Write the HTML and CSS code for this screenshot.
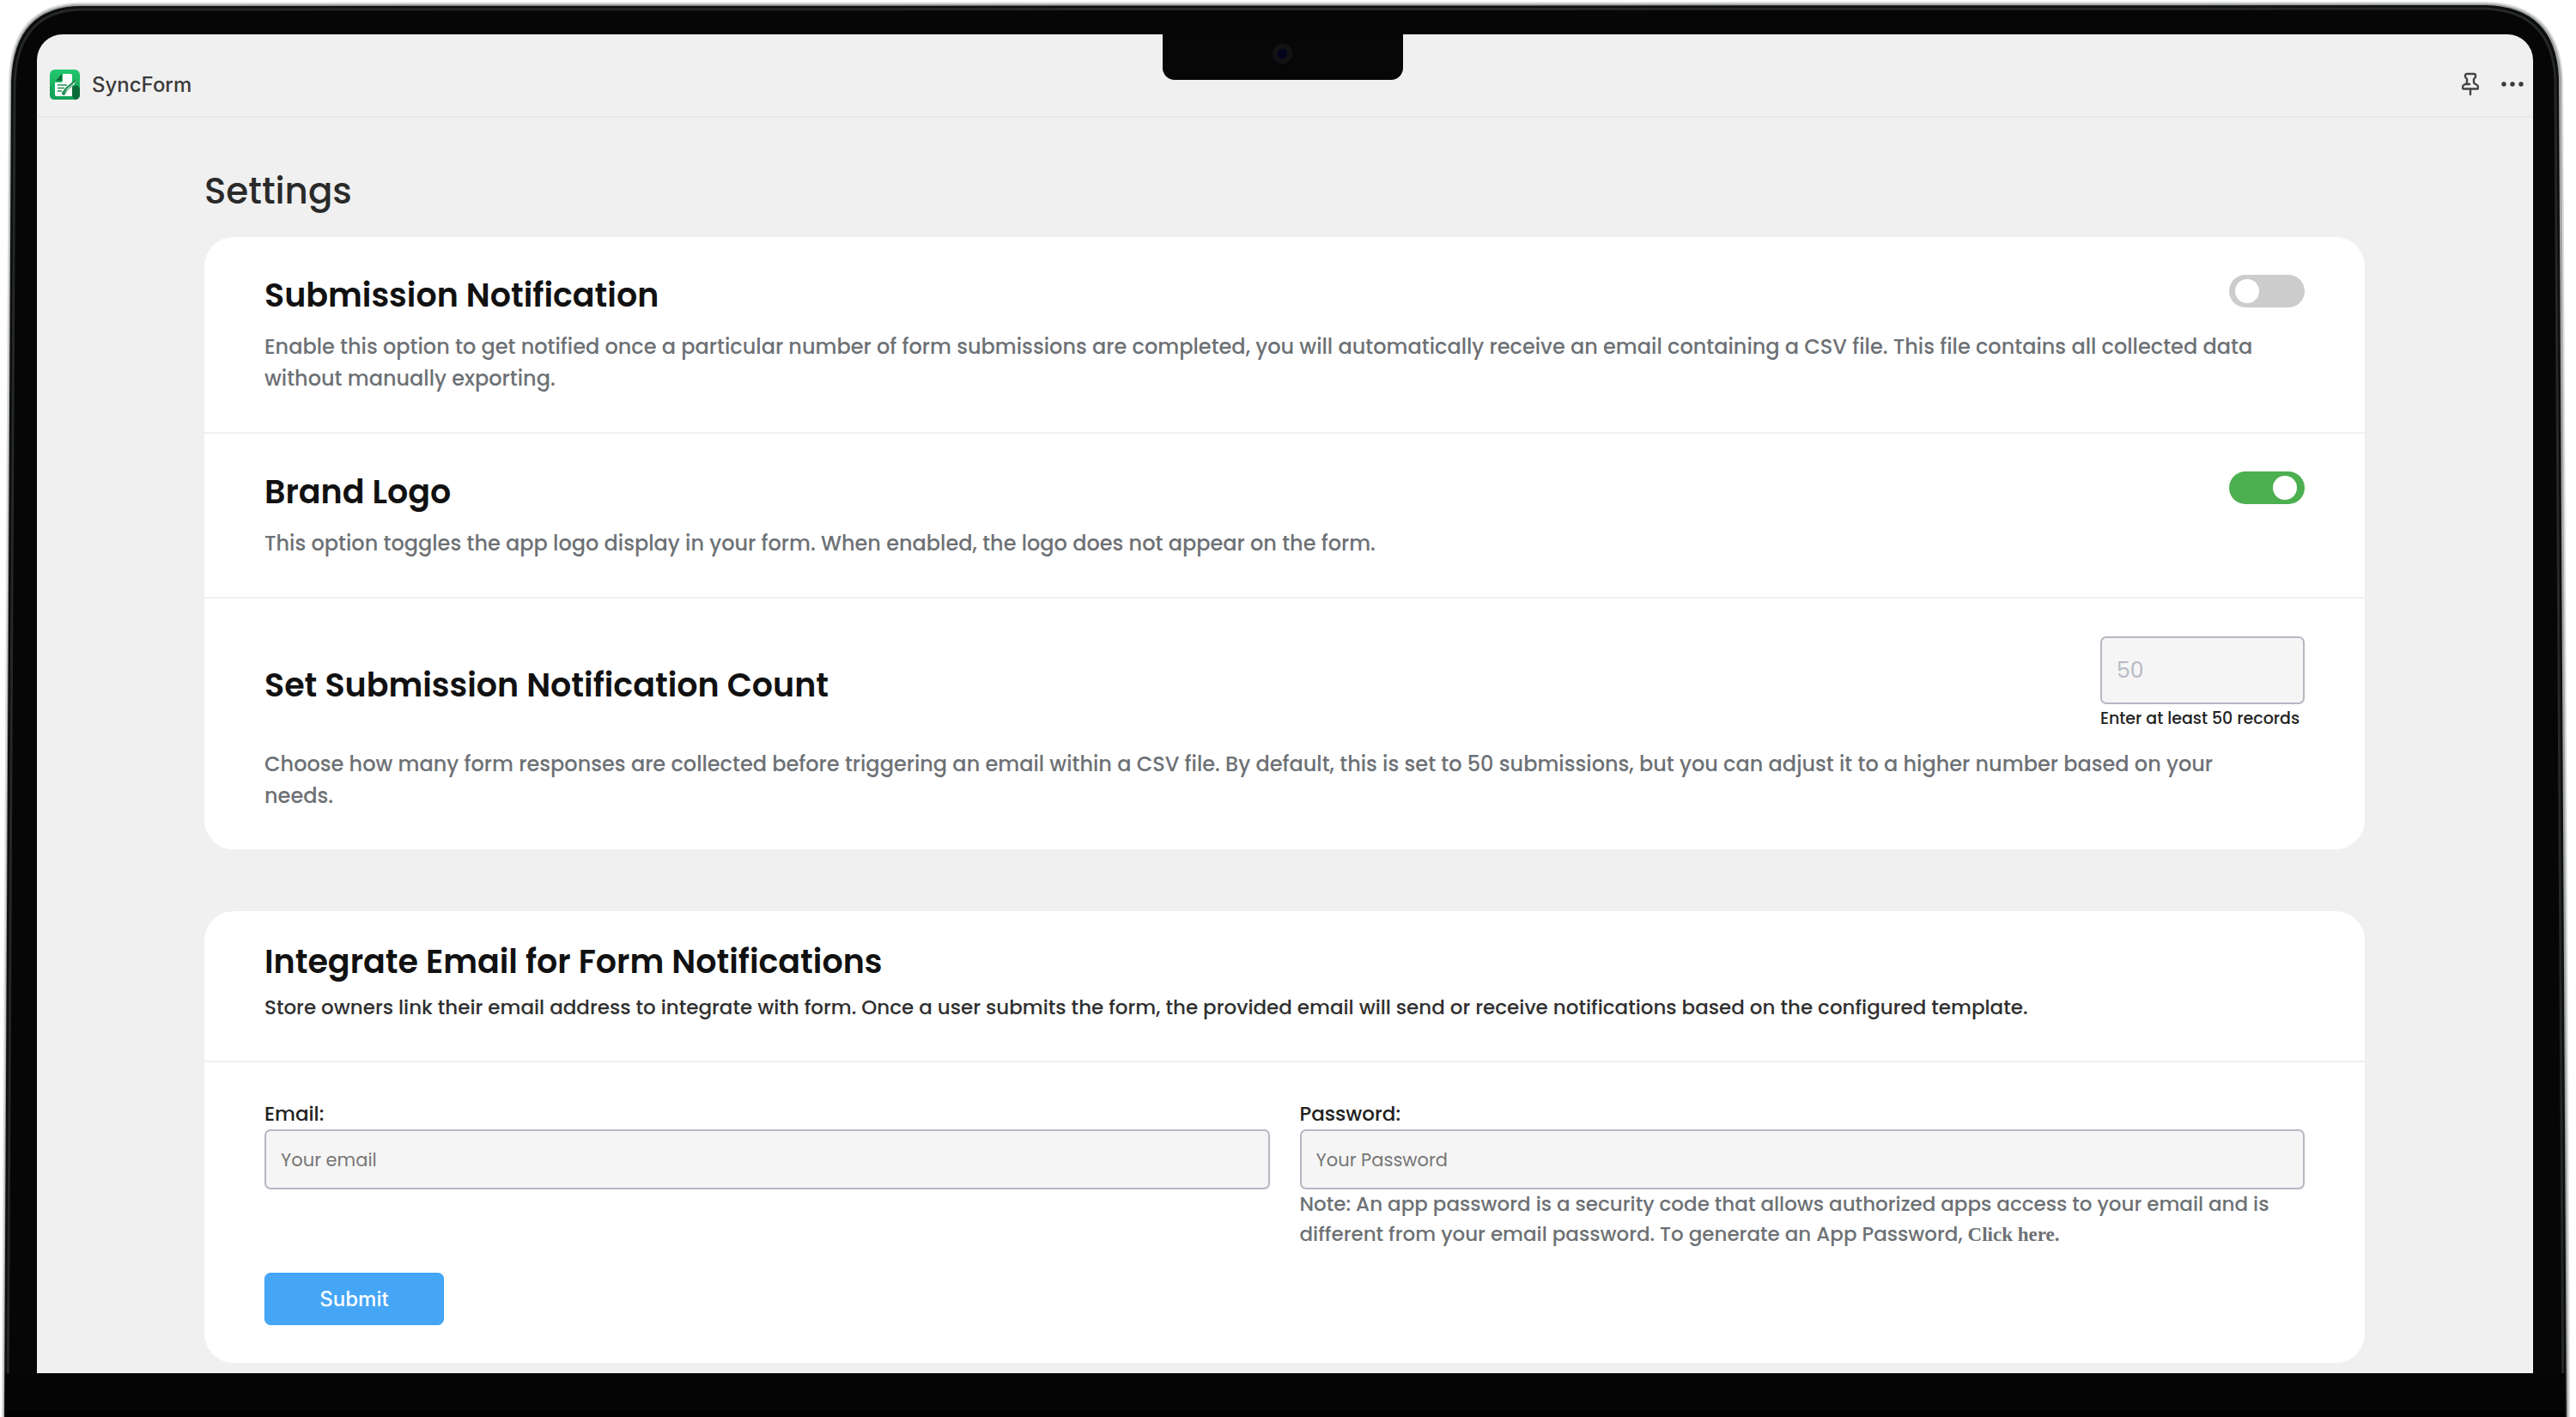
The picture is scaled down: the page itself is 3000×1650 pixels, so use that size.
FILE: index.html
```html
<!DOCTYPE html>
<html lang="en">
<head>
    <meta charset="UTF-8">
    <title>SyncForm - Settings</title>
    <link rel="stylesheet" href="styles.css">
</head>
<body>

    <!-- laptop shell -->
    <svg class="laptop" viewBox="0 0 3000 1650" preserveAspectRatio="none" aria-hidden="true">
        <path fill="#d9dada" d="M2 1650L10 95Q12 3 95 3L2895 2Q2980 4 2985 90L2993 1650Z"/>
        <path fill="#a3a4a4" d="M4 1650L12 95Q14 5 95 5L2895 4Q2978 6 2983 90L2991 1650Z"/>
        <path fill="#060606" stroke="#101212" stroke-width="2" d="M6 1650L14 95Q17 8 95 8L2895 7Q2975 9 2979 90L2988 1650Z"/>
        <path fill="#060606" stroke="#262828" stroke-width="3" d="M9 1650L17 97Q20 11 97 11L2893 10Q2972 12 2976 92L2985 1650Z"/>
        <rect x="6" y="1599" width="2981" height="44" fill="#050505"/>
        <rect x="6" y="1643" width="2981" height="7" fill="#000"/>
    </svg>

    <div class="screen">
        <div class="notch"><span class="camera"></span></div>

        <header class="topbar">
            <svg class="app-icon" viewBox="0 0 35 35" aria-hidden="true">
                <defs>
                    <linearGradient id="green" x1="0" y1="0" x2="0" y2="1">
                        <stop offset="0" stop-color="#22c76c"/>
                        <stop offset="1" stop-color="#14a257"/>
                    </linearGradient>
                </defs>
                <rect width="35" height="35" rx="6" fill="url(#green)"/>
                <path d="M0 18Q4 23 6 31L12 35H6Q0 35 0 29Z" fill="#15a457"/>
                <path d="M26 20L32 18L35 22V29Q35 35 29 35L26 31Z" fill="#0b6b38"/>
                <path d="M7 13L14 5V13Z" fill="#0c6a38"/>
                <path d="M15 5H24Q26 5 26 7V31H8Q6 31 6 29V15H13Q15 15 15 13Z" fill="#fff"/>
                <path d="M9 18H20M9 21.500H17M9 25H14" stroke="#1b8f50" stroke-width="1.600" fill="none"/>
                <path d="M31 13L20 22.500L15 29" stroke="#12884a" stroke-width="4" fill="none"/>
                <path d="M32 12.500L20.500 22L16 28L23 24Z" fill="#fff"/>
                <path d="M27 18L17 27" stroke="#12884a" stroke-width="1" fill="none"/>
            </svg>
            <span class="app-name">SyncForm</span>
            <button class="icon-btn" type="button" aria-label="Pin">
                <svg width="20" height="28" viewBox="0 0 20 28" fill="none" stroke="#444" stroke-width="2.400" stroke-linejoin="round" stroke-linecap="round">
                    <path d="M6 2H14Q16 2 16 4V5Q16 6 15 7L14 8V12Q14 13 15 13.500L17 14.500Q19 15.500 19 17.500V18Q19 19.500 18 19.500H2Q1 19.500 1 18V17.500Q1 15.500 3 14.500L5 13.500Q6 13 6 12V8L5 7Q4 6 4 5V4Q4 2 6 2Z"/>
                    <path d="M5 14H9M10 20V26"/>
                </svg>
            </button>
            <button class="icon-btn" type="button" aria-label="More">
                <svg width="26" height="8" viewBox="0 0 26 8" fill="#3a3a3a">
                    <circle cx="3" cy="4" r="2.700"/><circle cx="13" cy="4" r="2.700"/><circle cx="23" cy="4" r="2.700"/>
                </svg>
            </button>
        </header>

        <main>
            <h1>Settings</h1>

            <section class="card">
                <div class="row">
                    <div class="row-head">
                        <h2><label for="notify">Submission Notification</label></h2>
                        <input class="switch" id="notify" type="checkbox">
                    </div>
                    <p class="desc">Enable this option to get notified once a particular number of form submissions are completed, you will automatically receive an email containing a CSV file. This file contains all collected data without manually exporting.</p>
                </div>
                <div class="row">
                    <div class="row-head">
                        <h2><label for="brand">Brand Logo</label></h2>
                        <input class="switch" id="brand" type="checkbox" checked>
                    </div>
                    <p class="desc">This option toggles the app logo display in your form. When enabled, the logo does not appear on the form.</p>
                </div>
                <div class="row">
                    <div class="row-head count-head">
                        <h2><label for="count">Set Submission Notification Count</label></h2>
                        <div class="count">
                            <input class="field" id="count" type="text" value="50" disabled>
                            <small>Enter at least 50 records</small>
                        </div>
                    </div>
                    <p class="desc">Choose how many form responses are collected before triggering an email within a CSV file. By default, this is set to 50 submissions, but you can adjust it to a higher number based on your needs.</p>
                </div>
            </section>

            <section class="card">
                <div class="row intro">
                    <h2>Integrate Email for Form Notifications</h2>
                    <p>Store owners link their email address to integrate with form. Once a user submits the form, the provided email will send or receive notifications based on the configured template.</p>
                </div>
                <form class="row">
                    <div class="fields">
                        <div class="col">
                            <label for="email">Email:</label>
                            <input class="field" id="email" type="email" placeholder="Your email">
                        </div>
                        <div class="col">
                            <label for="password">Password:</label>
                            <input class="field" id="password" type="password" placeholder="Your Password">
                            <p class="note">Note: An app password is a security code that allows authorized apps access to your email and is different from your email password. To generate an App Password, <a href="#">Click here.</a></p>
                        </div>
                    </div>
                    <button class="submit" type="submit">Submit</button>
                </form>
            </section>
        </main>
    </div>

</body>
</html>
```
FILE: styles.css
```css
* {
    box-sizing: border-box;
}
body {
    margin: 0;
    padding: 40px 50px 51px 43px;
    min-height: 100vh;
    display: flex;
    background-color: white;
    color: #222;
    font-family: Poppins, Inter, "Liberation Sans", sans-serif;
    font-weight: 500;
}
h1, h2, p {
    margin: 0;
}

/* device */
.laptop {
    position: absolute;
    top: 0;
    left: 0;
    width: 100%;
    height: 100%;
}
.screen {
    position: relative;
    flex: 1;
    min-width: 0;
    background-color: #f0f0f0;
    border-radius: 30px 30px 0 0;
}
.notch {
    position: absolute;
    top: -2px;
    left: 50%;
    width: 280px;
    height: 55px;
    margin-left: -143px;
    border-radius: 0 0 14px 14px;
    background-color: #070707;
}
.camera {
    position: absolute;
    top: 13px;
    left: 128px;
    width: 23px;
    height: 23px;
    border: 6px solid #121214;
    border-radius: 50%;
    background-color: #02021c;
}

/* app bar */
.topbar {
    display: flex;
    align-items: center;
    height: 97px;
    padding: 21px 11px 0 15px;
    border-bottom: 2px solid #e8e8e8;
}
.app-icon {
    width: 35px;
    height: 35px;
}
.app-name {
    flex: 1;
    margin-left: 14px;
    font-size: 24px;
    font-family: Inter, sans-serif;
    color: #3a3a3a;
}
.icon-btn {
    display: flex;
    margin-left: 26px;
    padding: 0;
    border: 0;
    background: none;
}

main {
    padding: 56px 196px 11px 195px;
}
h1 {
    margin-bottom: 23px;
    font-size: 42px;
    line-height: 60px;
    font-weight: 500;
    color: #2a2a2a;
}
h2 {
    font-size: 38px;
    line-height: 48px;
    font-weight: 600;
    color: #111;
}
.card {
    border-radius: 34px;
    background-color: white;
}
.card + .card {
    margin-top: 72px;
}
.row {
    padding: 44px 70px;
}
.row + .row {
    border-top: 2px solid #f0f0f0;
}
.row-head {
    display: flex;
    justify-content: space-between;
    align-items: flex-start;
    margin-bottom: 17px;
}
.count-head {
    align-items: center;
}
.row p {
    font-size: 24px;
    line-height: 37px;
    color: #6d7175;
}
.row .desc {
    padding-right: 30px;
}

.switch {
    appearance: none;
    display: flex;
    align-items: center;
    width: 88px;
    height: 38px;
    margin: 0;
    padding: 0 7px;
    border-radius: 19px;
    background-color: #ccc;
}
.switch::before {
    content: "";
    width: 28px;
    height: 28px;
    border-radius: 50%;
    background-color: white;
}
.switch:checked {
    justify-content: flex-end;
    padding-right: 9px;
    background-color: #4caf50;
}

.field {
    width: 100%;
    height: 70px;
    padding: 0 17px;
    border: 2px solid #b5b8c2;
    border-radius: 7px;
    background-color: #f5f5f5;
    font: 400 21px Poppins, Inter, sans-serif;
}
.field::placeholder {
    color: #757575;
    opacity: 1;
}
.count {
    display: flex;
    flex-direction: column;
    width: 238px;
}
.count .field {
    height: 79px;
    font-size: 25px;
    color: #b7bac4;
}
.count small {
    font-size: 19px;
    line-height: 34px;
    white-space: nowrap;
}

/* email form */
.row.intro {
    padding-top: 35px;
}
.row.intro p {
    margin-top: 11px;
    font-size: 23px;
    line-height: 36px;
    color: #303030;
}
form.row {
    padding-top: 42px;
}
.fields {
    display: flex;
    gap: 35px;
    margin-bottom: 27px;
}
.col {
    flex: 1;
}
.col label {
    display: block;
    font-size: 23px;
    line-height: 36px;
}
.col .field {
    display: block;
}
.row .note {
    font-size: 23px;
    line-height: 35px;
}
.note a {
    font-family: "Liberation Serif", serif;
    font-weight: 700;
    color: inherit;
    text-decoration: none;
}
.submit {
    display: block;
    width: 209px;
    height: 61px;
    padding: 0;
    border: 1px solid #3a9ff5;
    border-radius: 7px;
    background-color: #46a6f6;
    color: white;
    font: 500 24px Inter, sans-serif;
}
```
